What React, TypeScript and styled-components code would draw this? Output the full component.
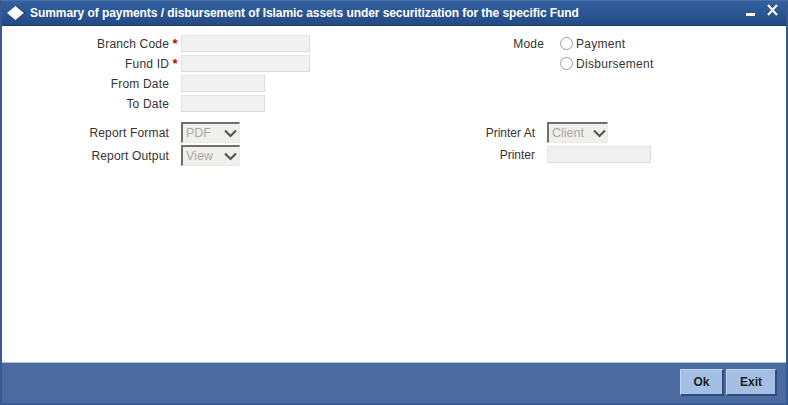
import React from 'react';
import styled, { createGlobalStyle } from 'styled-components';

const Global = createGlobalStyle`
  html, body { margin: 0; padding: 0; background: #fff; }
  body { font-family: "Liberation Sans", Arial, sans-serif; }
`;

const Frame = styled.div`
  width: 788px;
  height: 405px;
  box-sizing: border-box;
  display: flex;
  flex-direction: column;
  background: #3d6197;
  border-left: 2px solid #37598f;
  border-right: 2px solid #37598f;
  border-top: 1px solid #4a6fa5;
  border-bottom: 2px solid #3a5c92;
  overflow: hidden;
`;

const TitleBar = styled.div`
  height: 25px;
  flex: none;
  display: flex;
  align-items: center;
  background: linear-gradient(#34609f, #2a5590 55%, #234a85);
  border-bottom: 1px solid #1b3a6c;
  padding: 0 8px 0 5px;
  box-sizing: border-box;
`;

const TitleText = styled.div`
  flex: 1;
  margin-left: 4px;
  color: #fff;
  font-size: 12px;
  font-weight: 700;
  letter-spacing: -0.07px;
  white-space: nowrap;
`;

const Body = styled.div`
  flex: 1;
  background: #fff;
  border-bottom: 1px solid #a9bedd;
  padding: 9px 0 0;
  display: grid;
  grid-template-columns: 420px 1fr;
  align-content: start;
  row-gap: 10px;
`;

const Stack = styled.div<{ $gap: number }>`
  display: flex;
  flex-direction: column;
  gap: ${p => p.$gap}px;
`;

const Row = styled.div<{ $h: number }>`
  display: flex;
  align-items: center;
  height: ${p => p.$h}px;
`;

const Label = styled.div<{ $w: number; $ls?: number }>`
  width: ${p => p.$w}px;
  flex: none;
  text-align: right;
  font-size: 12px;
  letter-spacing: ${p => p.$ls ?? 0.17}px;
  color: #333;
  white-space: nowrap;
`;

const Star = styled.span`
  width: 12px;
  flex: none;
  color: #c00;
  font-size: 13px;
  font-weight: 700;
  text-align: center;
  line-height: 12px;
`;

const Field = styled.div<{ $w: number; $ml: number }>`
  width: ${p => p.$w}px;
  height: 17px;
  margin-left: ${p => p.$ml}px;
  box-sizing: border-box;
  background: #f1f1f1;
  border: 1px solid #e4e4e4;
  border-bottom-color: #dcdcdc;
  border-right-color: #dcdcdc;
`;

const Select = styled.div<{ $w: number; $ml: number; $pr: number }>`
  width: ${p => p.$w}px;
  height: 21px;
  margin-left: ${p => p.$ml}px;
  box-sizing: border-box;
  display: flex;
  align-items: center;
  justify-content: space-between;
  background: #f0efeb;
  border-style: solid;
  border-width: 2px 1px 1px 2px;
  border-color: #6f6f6f #ecebe6 #ecebe6 #6f6f6f;
  padding: 0 ${p => p.$pr}px 0 3px;
  color: #a8a8a8;
  font-size: 12.5px;
`;

const ModeRow = styled.div`
  display: flex;
  align-items: center;
  height: 17px;
`;

const Radio = styled.span<{ $ml: number }>`
  width: 13px;
  height: 13px;
  margin-left: ${p => p.$ml}px;
  margin-right: 3px;
  flex: none;
  box-sizing: border-box;
  border: 1px solid #9a9a9a;
  border-radius: 50%;
  background: #fff;
`;

const RadioText = styled.span`
  font-size: 12px;
  color: #333;
  letter-spacing: 0.3px;
`;

const Footer = styled.div`
  height: 40px;
  flex: none;
  background: #4a6aa0;
  display: flex;
  justify-content: flex-end;
  align-items: flex-start;
  gap: 2px;
  padding: 6px 9px 0 0;
  box-sizing: border-box;
`;

const Button = styled.button<{ $w: number }>`
  width: ${p => p.$w}px;
  height: 27px;
  box-sizing: border-box;
  padding: 0;
  background: #a3c0e4;
  border-style: solid;
  border-width: 1px 2px 2px 1px;
  border-color: #c3d6ee #2f4d7e #2f4d7e #c3d6ee;
  font-family: inherit;
  font-size: 12px;
  font-weight: 700;
  color: #1c1c1c;
`;

const WindowSvg = styled.svg`
  margin-bottom: 6px;
  flex: none;
`;

const Chevron = () => (
  <svg width="13" height="9" viewBox="0 0 13 9">
    <path d="M1 1.5 L6.5 7 L12 1.5" fill="none" stroke="#555" strokeWidth="2.2" />
  </svg>
);

const Diamond = () => (
  <svg width="19" height="14" viewBox="0 0 19 14">
    <path d="M9.5 0 L18.5 7 L9.5 14 Z" fill="#12305f" />
    <path d="M8.5 0 L17 7 L8.5 14 L0 7 Z" fill="#fff" />
  </svg>
);

const WindowIcons = () => (
  <WindowSvg width="32" height="14" viewBox="0 0 32 14">
    <rect x="0" y="10" width="9" height="3" fill="#fff" />
    <path d="M22 2 L31 12 M31 2 L22 12" stroke="#fff" strokeWidth="2" fill="none" />
  </WindowSvg>
);

export default function App() {
  return (
    <>
      <Global />
      <Frame>
        <TitleBar>
          <Diamond />
          <TitleText>Summary of payments / disbursement of Islamic assets under securitization for the specific Fund</TitleText>
          <WindowIcons />
        </TitleBar>
        <Body>
          <Stack $gap={3}>
            <Row $h={17}><Label $w={167}>Branch Code</Label><Star>*</Star><Field $w={129} $ml={0} /></Row>
            <Row $h={17}><Label $w={167}>Fund ID</Label><Star>*</Star><Field $w={129} $ml={0} /></Row>
            <Row $h={17}><Label $w={167}>From Date</Label><Field $w={84} $ml={12} /></Row>
            <Row $h={17}><Label $w={167}>To Date</Label><Field $w={84} $ml={12} /></Row>
          </Stack>
          <Stack $gap={3}>
            <ModeRow><Label $w={122}>Mode</Label><Radio $ml={16} /><RadioText>Payment</RadioText></ModeRow>
            <ModeRow><Label $w={122} /><Radio $ml={16} /><RadioText>Disbursement</RadioText></ModeRow>
          </Stack>
          <Stack $gap={2}>
            <Row $h={21}><Label $w={167}>Report Format</Label><Select $w={59} $ml={12} $pr={2}>PDF<Chevron /></Select></Row>
            <Row $h={21}><Label $w={167}>Report Output</Label><Select $w={59} $ml={12} $pr={2}>View<Chevron /></Select></Row>
          </Stack>
          <Stack $gap={3}>
            <Row $h={21}><Label $w={113} $ls={0}>Printer At</Label><Select $w={61} $ml={12} $pr={1}>Client<Chevron /></Select></Row>
            <Row $h={17}><Label $w={113} $ls={0}>Printer</Label><Field $w={104} $ml={12} /></Row>
          </Stack>
        </Body>
        <Footer>
          <Button $w={44}>Ok</Button>
          <Button $w={51}>Exit</Button>
        </Footer>
      </Frame>
    </>
  );
}
